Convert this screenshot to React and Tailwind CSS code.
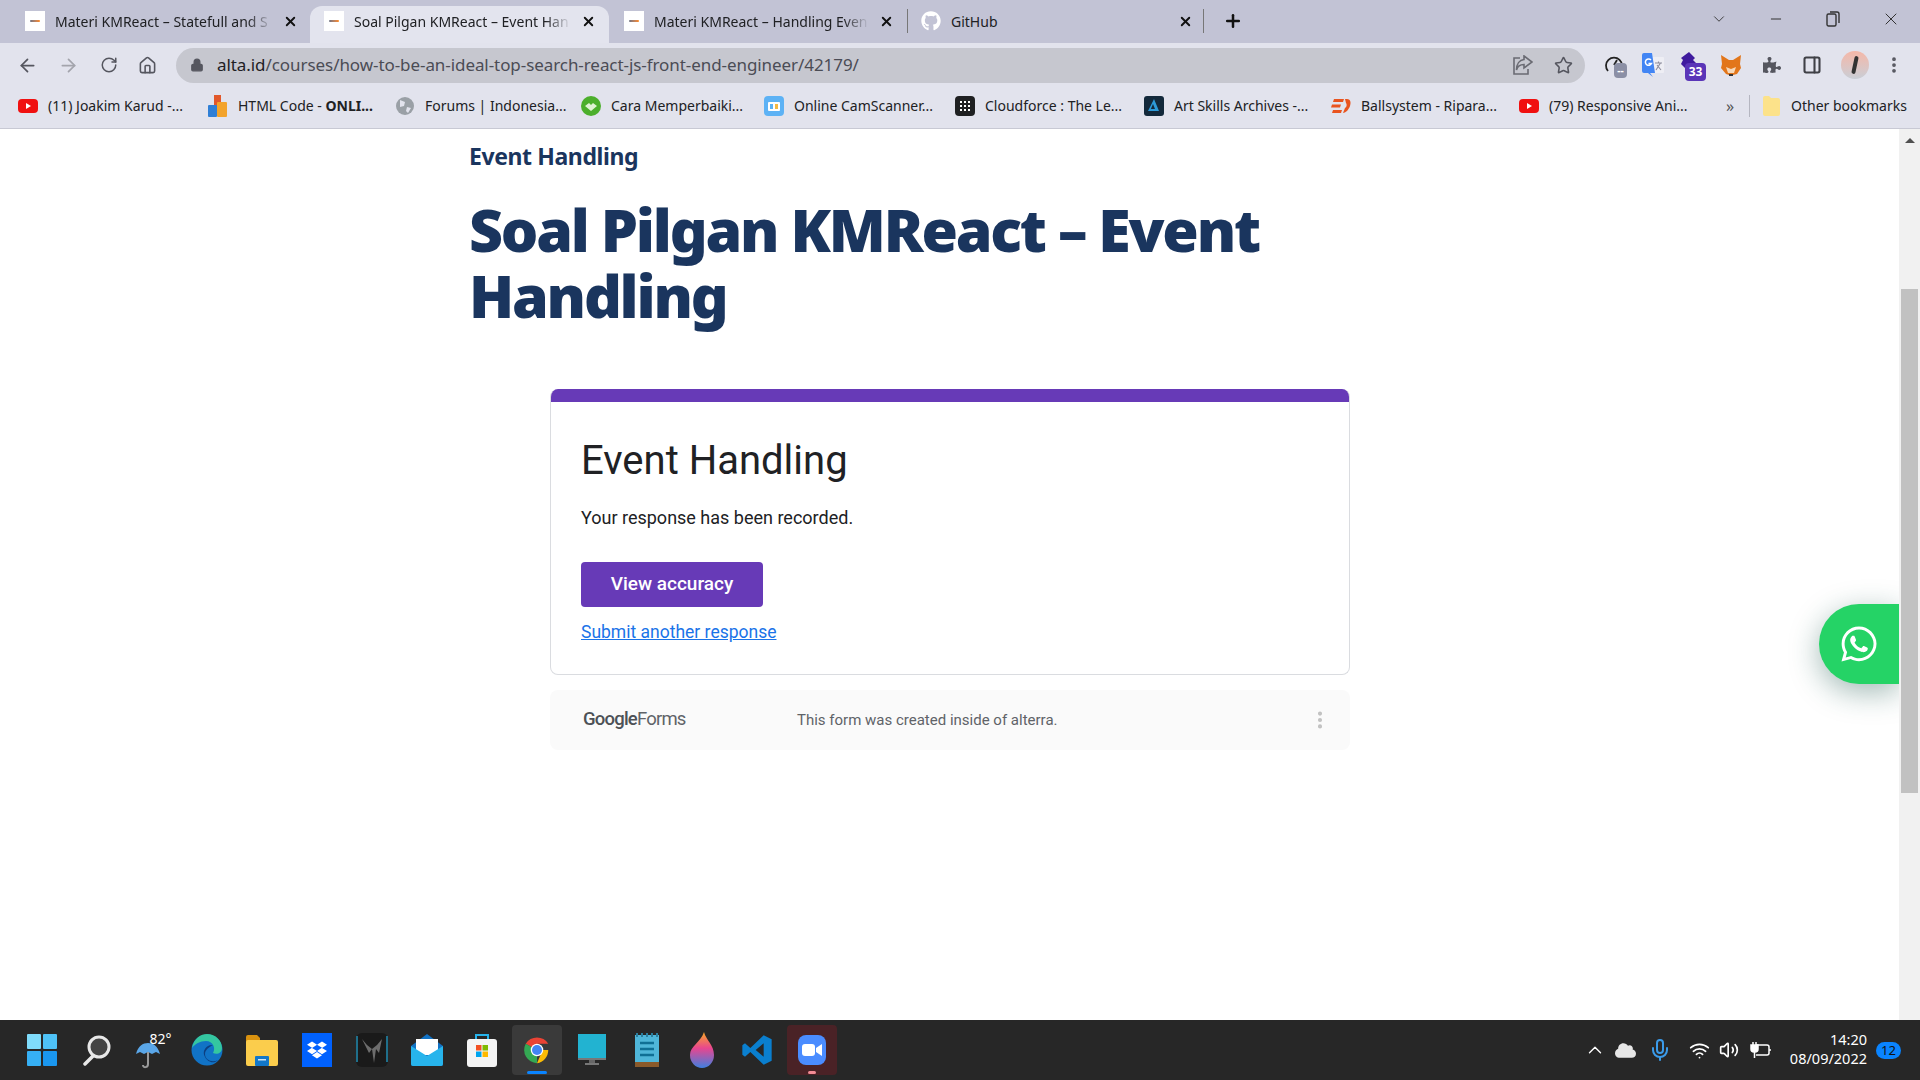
import { ArrowLeft, ArrowRight, RotateCw, Home, Lock, Star, PanelRight, EllipsisVertical, X, Plus, Minus, ChevronDown, ChevronUp, Mic, Wifi, Volume2 } from 'lucide-react';
import { FaWhatsapp, FaGithub, FaCloud, FaDropbox, FaPuzzlePiece } from 'react-icons/fa';

const uiFont = 'font-["Noto_Sans",sans-serif]';

const Favicon = () => (
    <div className="w-5 h-5 bg-white flex items-center justify-center shrink-0">
        <div className="w-[10px] h-[2px] bg-gradient-to-r from-gray-500 to-orange-400 rounded-full"></div>
    </div>
);

const tabs = [
    { title: 'Materi KMReact – Statefull and S', box: 'w-[310px] pl-[25px] pr-[12px]' },
    { title: 'Soal Pilgan KMReact – Event Han', box: 'w-[299px] pl-[14px] pr-[13px] bg-[#e3e4ee] rounded-t-xl', active: true },
    { title: 'Materi KMReact – Handling Even', box: 'w-[298px] pl-[15px] pr-[13px]' },
];

const bookmarks = [
    { label: '(11) Joakim Karud -...', box: 'w-[190px]', icon: <YouTubeIcon /> },
    { label: 'HTML Code - ', bold: 'ONLI...', box: 'w-[187px]', icon: <HtmlIcon /> },
    { label: 'Forums | Indonesia...', box: 'w-[186px]', icon: <GlobeIcon /> },
    { label: 'Cara Memperbaiki...', box: 'w-[183px]', icon: <CaraIcon /> },
    { label: 'Online CamScanner...', box: 'w-[191px]', icon: <CamIcon /> },
    { label: 'Cloudforce : The Le...', box: 'w-[189px]', icon: <GridIcon /> },
    { label: 'Art Skills Archives -...', box: 'w-[187px]', icon: <ArtIcon /> },
    { label: 'Ballsystem - Ripara...', box: 'w-[188px]', icon: <BallIcon /> },
    { label: '(79) Responsive Ani...', box: 'w-[207px]', icon: <YouTubeIcon /> },
];

function YouTubeIcon() {
    return (
        <svg width="20" height="20" viewBox="0 0 20 20">
            <rect x="0" y="3" width="20" height="14" rx="4" fill="#f01010" />
            <path d="M8 7l5 3-5 3z" fill="#fff" />
        </svg>
    );
}

function HtmlIcon() {
    return (
        <svg width="20" height="22" viewBox="0 0 20 22">
            <rect x="6" y="0" width="7" height="11" fill="#e2582b" />
            <rect x="0" y="10" width="9" height="12" rx="1" fill="#2f7fd6" />
            <rect x="9" y="7" width="10" height="15" rx="1" fill="#f3a32b" />
        </svg>
    );
}

function GlobeIcon() {
    return (
        <svg width="20" height="20" viewBox="0 0 20 20">
            <circle cx="10" cy="10" r="9" fill="#9aa0a6" />
            <path d="M5 4l5 2-1 4-4 1zM12 11l4 1-3 5-2-2z" fill="#e2e3ed" />
        </svg>
    );
}

function CaraIcon() {
    return (
        <svg width="20" height="22" viewBox="0 0 20 22">
            <circle cx="10" cy="11" r="10" fill="#4caf2c" />
            <path d="M4 11l4-3 2 2 2-2 4 3-6 5z" fill="#dff3d3" />
        </svg>
    );
}

function CamIcon() {
    return (
        <svg width="20" height="20" viewBox="0 0 20 20">
            <rect width="20" height="20" rx="4" fill="#5db2f5" />
            <rect x="4" y="6" width="12" height="9" rx="1" fill="#fff" />
            <rect x="6" y="8" width="3" height="5" fill="#5db2f5" />
            <rect x="11" y="8" width="3" height="5" fill="#f5b942" />
        </svg>
    );
}

function GridIcon() {
    return (
        <svg width="20" height="20" viewBox="0 0 20 20">
            <rect width="20" height="20" rx="4" fill="#1f2022" />
            <path d="M5 5h2v2H5zM9 5h2v2H9zM13 5h2v2h-2zM5 9h2v2H5zM9 9h2v2H9zM13 9h2v2h-2zM5 13h2v2H5zM9 13h2v2H9zM13 13h2v2h-2z" fill="#fff" />
        </svg>
    );
}

function ArtIcon() {
    return (
        <svg width="20" height="20" viewBox="0 0 20 20">
            <rect width="20" height="20" rx="3" fill="#13293b" />
            <path d="M10 3l5 12H5l2-2h4L9 8l-3 7H4z" fill="#2d9ad8" />
        </svg>
    );
}

function BallIcon() {
    return (
        <svg width="20" height="14" viewBox="0 0 20 14">
            <path d="M3 0h10l-1 3H2zM1 5.500h9l-1 3H0zM2 11h9l-1 3H1zM14 0h2c4 0 4 4 3 7s-4 7-7 7l2-5c2-1 2-4 1-5z" fill="#e9541f" />
        </svg>
    );
}

// taskbar icons, all drawn in a 34px box
function WinIcon() {
    return (
        <svg width="30" height="32" viewBox="0 0 30 32">
            <rect width="14" height="15" rx="1" fill="#7fdcfb" />
            <rect x="16" width="14" height="15" rx="1" fill="#4ec2f7" />
            <rect y="17" width="14" height="15" rx="1" fill="#36b0f5" />
            <rect x="16" y="17" width="14" height="15" rx="1" fill="#1a97f0" />
        </svg>
    );
}

function MagnifierIcon() {
    return (
        <svg width="30" height="32" viewBox="0 0 30 32">
            <circle cx="17" cy="13" r="10" fill="#444" stroke="#e8e8e8" strokeWidth="3" />
            <path d="M11 22L3 30" stroke="#e8e8e8" strokeWidth="3.500" strokeLinecap="round" />
        </svg>
    );
}

function WeatherIcon() {
    return (
        <div className="relative w-[44px] h-[36px]">
            <svg className="absolute left-[5px] top-[9px]" width="26" height="28" viewBox="0 0 26 28">
                <path d="M1 13C3 5 8 2 13 2s10 3 12 11l-4-2-4 2-4-2-4 2-4-2z" fill="#5aa6e8" />
                <path d="M13 11v12c0 4-5 4-5 1" stroke="#9a9a9a" strokeWidth="2" fill="none" />
            </svg>
            <span className={`absolute left-[20px] top-[-4px] text-white text-[14px] ${uiFont}`}>82°</span>
        </div>
    );
}

function EdgeIcon() {
    return (
        <svg width="32" height="34" viewBox="0 0 32 34">
            <circle cx="16" cy="17" r="15.500" fill="#1173c6" />
            <path d="M1 15C3 5 10 1 16 1c9 0 15 7 15 14 0 5-5 7-9 5 3-5 0-12-7-12-6 0-11 3-14 7z" fill="#34c6a0" />
            <path d="M22 12a8 8 0 0 0-8 12c2 4 8 8 13 3-6 3-13 0-13-6 0-4 4-7 8-9z" fill="#0d3f80" />
        </svg>
    );
}

function FolderIcon() {
    return (
        <svg width="32" height="32" viewBox="0 0 32 32">
            <path d="M0 3a2 2 0 0 1 2-2h9l3 3v5H0z" fill="#d9920f" />
            <rect y="6" width="32" height="26" rx="2" fill="#fbcd4c" />
            <rect x="9" y="22" width="14" height="10" rx="1" fill="#1277c9" />
            <rect x="12" y="25" width="8" height="1.500" fill="#cfe5f5" />
        </svg>
    );
}

function DropboxIcon() {
    return (
        <div className="w-[30px] h-[34px] bg-[#0061fe] flex items-center justify-center">
            <FaDropbox className="text-white" size={20} />
        </div>
    );
}

function PredatorIcon() {
    return (
        <svg width="32" height="34" viewBox="0 0 32 34">
            <rect width="32" height="34" rx="6" fill="#1a1a1a" />
            <path d="M1 3v26M31 3v26" stroke="#1f6f8b" strokeWidth="2" />
            <path d="M6 6l5 6 5 4 5-4 5-6-3 14-3-4-2 14-2-14-3 4z" fill="#6d6d6d" />
        </svg>
    );
}

function MailIcon() {
    return (
        <svg width="32" height="32" viewBox="0 0 32 32">
            <path d="M0 12L16 0l16 12v18a2 2 0 0 1-2 2H2a2 2 0 0 1-2-2z" fill="#1272c4" />
            <path d="M5 5h22v16H5z" fill="#fff" />
            <path d="M0 12l16 10 16-10v18a2 2 0 0 1-2 2H2a2 2 0 0 1-2-2z" fill="#27b4ec" />
        </svg>
    );
}

function StoreIcon() {
    return (
        <svg width="30" height="34" viewBox="0 0 30 34">
            <path d="M9 7V2h12v5" stroke="#27b4ec" strokeWidth="2" fill="none" />
            <rect y="6" width="30" height="28" rx="3" fill="#f4f4f4" />
            <rect x="9" y="12" width="5.500" height="5.500" fill="#f25022" />
            <rect x="15.500" y="12" width="5.500" height="5.500" fill="#7fba00" />
            <rect x="9" y="18.500" width="5.500" height="5.500" fill="#00a4ef" />
            <rect x="15.500" y="18.500" width="5.500" height="5.500" fill="#ffb900" />
        </svg>
    );
}

function ChromeIcon() {
    return (
        <svg width="30" height="30" viewBox="0 0 48 48">
            <path d="M24 24L6 14A21 21 0 0 1 42 14H24z" fill="#ea4335" />
            <path d="M24 24H42A21 21 0 0 1 24 45l9-21z" fill="#fbbc05" />
            <path d="M24 24l-0 21A21 21 0 0 1 6 14z" fill="#34a853" />
            <circle cx="24" cy="24" r="10" fill="#fff" />
            <circle cx="24" cy="24" r="8" fill="#4285f4" />
        </svg>
    );
}

function MonitorIcon() {
    return (
        <svg width="28" height="32" viewBox="0 0 28 32">
            <rect width="28" height="24" fill="#22b3d1" />
            <rect y="24" width="28" height="2" fill="#777" />
            <rect x="11" y="26" width="6" height="3" fill="#666" />
            <rect x="7" y="29" width="14" height="2" fill="#777" />
        </svg>
    );
}

function NotepadIcon() {
    return (
        <svg width="24" height="34" viewBox="0 0 24 34">
            <rect y="2" width="24" height="32" fill="#4fb6d9" />
            <rect y="29" width="24" height="5" fill="#8a5a2b" />
            <path d="M5 10h14M5 16h14M5 22h14" stroke="#0f6f95" strokeWidth="2.500" />
            <path d="M2 0v4M7 0v4M12 0v4M17 0v4M22 0v4" stroke="#2b7f9f" strokeWidth="2" />
        </svg>
    );
}

function PaintIcon() {
    return (
        <svg width="24" height="36" viewBox="0 0 24 36">
            <defs>
                <linearGradient id="paintGrad" x1="0" y1="0" x2="0" y2="1">
                    <stop offset="0" stopColor="#f9a825" />
                    <stop offset="0.450" stopColor="#e8468f" />
                    <stop offset="1" stopColor="#3f7fe0" />
                </linearGradient>
            </defs>
            <path d="M14 0c2 8 10 13 10 23a12 13 0 0 1-24 0C0 14 11 10 14 0z" fill="url(#paintGrad)" />
        </svg>
    );
}

function VsCodeIcon() {
    return (
        <svg width="32" height="34" viewBox="0 0 24 24">
            <path d="M17 1l6 3v16l-6 3-10-9.500L3 17l-2-1.500v-7L3 7l4 3.500z M17 7l-6 5 6 5z" fill="#0a7fcf" fillRule="evenodd" />
        </svg>
    );
}

function ZoomIcon() {
    return (
        <div className="w-[28px] h-[30px] rounded-[8px] bg-[#4a8cff] flex items-center justify-center">
            <svg width="20" height="12" viewBox="0 0 20 12">
                <rect width="13" height="12" rx="3" fill="#fff" />
                <path d="M14 4l6-4v12l-6-4z" fill="#fff" />
            </svg>
        </div>
    );
}

const taskbarIcons = [
    { id: 'win', icon: <WinIcon /> },
    { id: 'search', icon: <MagnifierIcon /> },
    { id: 'weather', icon: <WeatherIcon /> },
    { id: 'edge', icon: <EdgeIcon /> },
    { id: 'files', icon: <FolderIcon /> },
    { id: 'dropbox', icon: <DropboxIcon /> },
    { id: 'predator', icon: <PredatorIcon /> },
    { id: 'mail', icon: <MailIcon /> },
    { id: 'store', icon: <StoreIcon /> },
    { id: 'chrome', icon: <ChromeIcon />, box: 'bg-[#3a3a3a] rounded', dot: 'w-5 bg-[#0a84ff]' },
    { id: 'monitor', icon: <MonitorIcon /> },
    { id: 'notepad', icon: <NotepadIcon /> },
    { id: 'paint', icon: <PaintIcon /> },
    { id: 'vscode', icon: <VsCodeIcon /> },
    { id: 'zoom', icon: <ZoomIcon />, box: 'bg-[#4a2226] rounded', dot: 'w-2 bg-[#f28b94]' },
];

const App = () => {
    return (
        <div className={`h-screen w-full flex flex-col overflow-hidden bg-white ${uiFont}`}>
            {/* Tab strip */}
            <div className="h-[43px] bg-[#c2c3d5] flex items-end shrink-0 text-[14px] text-[#202124]">
                {tabs.map(tab => (
                    <div key={tab.title} className={`h-[37px] pb-[7px] flex items-center gap-[10px] shrink-0 ${tab.box}`}>
                        <Favicon />
                        <span className="flex-1 overflow-hidden whitespace-nowrap [mask-image:linear-gradient(to_right,black_88%,transparent)]">{tab.title}</span>
                        <X size={15} strokeWidth={3} className="shrink-0 text-[#111]" />
                    </div>
                ))}
                <div className="h-[37px] pb-[7px] flex items-center shrink-0">
                    <div className="w-px h-[24px] bg-[#777]"></div>
                    <FaGithub size={20} className="text-white ml-[13px]" />
                    <span className="ml-[10px] w-[227px]">GitHub</span>
                    <X size={15} strokeWidth={3} className="shrink-0 text-[#111]" />
                    <div className="w-px h-[24px] bg-[#777] ml-[10px]"></div>
                    <Plus size={20} strokeWidth={3} className="ml-[19px] text-[#111]" />
                </div>
                <div className="flex-1"></div>
                <div className="h-[43px] flex items-center text-[#333] pb-[6px]">
                    <ChevronDown size={18} strokeWidth={1.2} className="mr-[40px]" />
                    <Minus size={16} strokeWidth={1.5} className="mr-[42px]" />
                    <svg className="mr-[41px]" width="14" height="16" viewBox="0 0 14 16" fill="none" stroke="#333" strokeWidth="1.400">
                        <rect x="1" y="3" width="9" height="12" rx="1.500" />
                        <path d="M4 1h7a2 2 0 0 1 2 2v9" />
                    </svg>
                    <X size={20} strokeWidth={1.2} className="mr-[19px]" />
                </div>
            </div>

            {/* Toolbar */}
            <div className="h-[44px] bg-[#e2e3ed] flex items-center shrink-0 text-[#55565f]">
                <ArrowLeft size={21} className="ml-[17px]" />
                <ArrowRight size={21} className="ml-[20px] text-[#a3a4ac]" />
                <RotateCw size={18} className="ml-[21px]" />
                <Home size={19} className="ml-[20px]" />
                <div className="ml-[19px] w-[1409px] h-[35px] rounded-full bg-[#c6c7cf] flex items-center">
                    <Lock size={14} fill="currentColor" className="ml-[14px] shrink-0" />
                    <span className="ml-[13px] text-[17px] tracking-[-0.07px] text-[#4b4c55] flex-1 whitespace-nowrap">
                        <span className="text-[#1f2024]">alta.id</span>/courses/how-to-be-an-ideal-top-search-react-js-front-end-engineer/42179/
                    </span>
                    <svg className="mr-[21px] text-[#6a6b73]" width="21" height="20" viewBox="0 0 21 20" fill="none" stroke="currentColor" strokeWidth="1.600">
                        <path d="M8 3H2v16h14v-5" />
                        <path d="M12 1l8 6-8 6V9.500C8 9.500 5.500 11 4.500 15 4.500 9 7.500 5 12 4.500z" />
                    </svg>
                    <Star size={19} className="mr-[12px]" />
                </div>
                <div className="relative ml-[19px] w-[22px] h-[22px]">
                    <svg width="20" height="20" viewBox="0 0 20 20" fill="none" stroke="#222" strokeWidth="1.800">
                        <path d="M4 17A8 8 0 1 1 16 17" />
                        <path d="M10 11l3-5" />
                    </svg>
                    <div className="absolute left-[10px] top-[9px] w-[13px] h-[15px] bg-[#8b8fa5] rounded-sm text-white text-[10px] leading-[15px] text-center font-bold">--</div>
                </div>
                <svg className="ml-[16px]" width="22" height="24" viewBox="0 0 22 24">
                    <path d="M9 4h12a1 1 0 0 1 1 1v14a1 1 0 0 1-1 1H9z" fill="#eeeef4" />
                    <path d="M13 10h7M16.500 8.500v1.500M14 17l4.500-7M15 12l4 5" stroke="#8c8c9c" strokeWidth="1.100" fill="none" />
                    <path d="M0 2a2 2 0 0 1 2-2h8l3 20H8l3 4-5-4H2a2 2 0 0 1-2-2z" fill="#4285f4" />
                    <path d="M9 7a3.200 3.200 0 1 0 0.500 3.500H6.500" fill="none" stroke="#fff" strokeWidth="1.500" />
                </svg>
                <div className="relative ml-[13px] w-[24px] h-[26px]">
                    <svg width="24" height="24" viewBox="0 0 24 24">
                        <path d="M12 0l6 6-2 2 4 4-8 8-8-8 2-4-2-2z" fill="#3f1b9e" />
                    </svg>
                    <div className="absolute left-[8px] top-[11px] w-[21px] h-[18px] rounded-sm bg-[#5a35b8] text-white text-[12px] leading-[18px] text-center font-bold">33</div>
                </div>
                <svg className="ml-[19px]" width="22" height="22" viewBox="0 0 22 22">
                    <path d="M1 1l8 5h4l8-5-1 9 1 4-4 6-4 1h-4l-3-1-5-6 1-4z" fill="#e2761b" />
                    <path d="M6 13l5 2 5-2-2 6h-6z" fill="#f6d8b8" />
                    <path d="M9 20h4v2H9z" fill="#333" />
                </svg>
                <FaPuzzlePiece size={18} className="ml-[21px] text-[#55565f]" />
                <PanelRight size={20} className="ml-[21px] text-[#3f4046]" strokeWidth={2.500} />
                <div className="ml-[19px] w-[28px] h-[28px] rounded-full bg-gradient-to-b from-[#f4b7a8] to-[#c9ced6] flex items-center justify-center">
                    <div className="w-[4px] h-[18px] bg-[#333] rounded-full rotate-12"></div>
                </div>
                <EllipsisVertical size={20} strokeWidth={2.500} className="ml-[15px]" />
            </div>

            {/* Bookmarks bar */}
            <div className="h-[42px] pb-[4px] bg-[#e2e3ed] border-b border-[#c8c9d4] flex items-center shrink-0 pl-[18px] text-[14px] text-[#202124] whitespace-nowrap">
                {bookmarks.map((b, i) => (
                    <div key={i} className={`flex items-center gap-[10px] shrink-0 ${b.box}`}>
                        <div className="w-5 flex justify-center">{b.icon}</div>
                        <span>{b.label}{b.bold && <b className="font-bold">{b.bold}</b>}</span>
                    </div>
                ))}
                <span className="text-[16px] text-[#555] w-[23px]">»</span>
                <div className="w-px h-[22px] bg-[#b5b6c1]"></div>
                <svg className="ml-[13px]" width="17" height="20" viewBox="0 0 17 20">
                    <path d="M0 2a2 2 0 0 1 2-2h4l2 2h7a2 2 0 0 1 2 2v14a2 2 0 0 1-2 2H2a2 2 0 0 1-2-2z" fill="#fce28a" />
                </svg>
                <span className="ml-[11px]">Other bookmarks</span>
            </div>

            {/* Page */}
            <div className="flex-1 flex min-h-0 relative">
                <main className="flex-1 relative overflow-hidden">
                    <div className="ml-[469px] w-[881px] font-['Noto_Sans',sans-serif] text-[#1a355e]">
                        <h3 className="mt-[9px] text-[23px] leading-[36px] font-bold tracking-[-0.4px]">Event Handling</h3>
                        <h1 className="mt-[22px] text-[59px] leading-[66px] font-black tracking-[-2.2px]">Soal Pilgan KMReact – Event Handling</h1>
                    </div>

                    <div className="ml-[550px] mt-[61px] w-[800px] font-['Roboto',sans-serif]">
                        <div className="bg-white border border-[#dadce0] border-t-0 rounded-lg overflow-hidden h-[286px]">
                            <div className="h-[13px] bg-[#673ab7] -mx-px"></div>
                            <div className="pl-[30px]">
                                <h2 className="mt-[35px] text-[40px] leading-[48px] text-[#202124]">Event Handling</h2>
                                <p className="mt-[19px] text-[18px] leading-[27px] text-[#202124]">Your response has been recorded.</p>
                                <button className="mt-[31px] w-[182px] h-[45px] rounded bg-[#673ab7] text-white text-[19px] font-medium block">View accuracy</button>
                                <a href="#" className="mt-[12px] inline-block text-[17.500px] leading-[27px] text-[#1a73e8] underline">Submit another response</a>
                            </div>
                        </div>
                        <div className="mt-[15px] h-[60px] rounded-lg bg-[#fafafa] flex items-center pl-[33px] pr-[19px]">
                            <span className="w-[214px] text-[18.500px] tracking-[-0.8px] text-[#5f6368]"><span className="font-medium text-[#4d5156]">Google</span>Forms</span>
                            <span className="flex-1 text-[15px] text-[#5f6368]">This form was created inside of alterra.</span>
                            <EllipsisVertical size={22} strokeWidth={2.500} className="text-[#c0c0c0]" />
                        </div>
                    </div>

                    {/* Whatsapp floating button */}
                    <div className="absolute right-0 top-[475px] w-[80px] h-[80px] bg-[#25d366] rounded-l-[40px] shadow-[0_8px_30px_rgba(20,80,70,0.4)] flex items-center justify-center">
                        <FaWhatsapp size={40} className="text-white" />
                    </div>
                </main>

                {/* Scrollbar */}
                <div className="w-[21px] bg-[#f1f1f1] flex flex-col items-center shrink-0">
                    <div className="mt-[9px] w-0 h-0 border-l-[5px] border-r-[5px] border-b-[5px] border-l-transparent border-r-transparent border-b-[#505050]"></div>
                    <div className="mt-[146px] w-[17px] h-[504px] bg-[#c1c1c1]"></div>
                </div>
            </div>

            {/* Taskbar */}
            <div className="h-[60px] bg-[#272727] flex items-center shrink-0 pl-[14px] relative">
                {taskbarIcons.map(item => (
                    <div key={item.id} className="w-[55px] h-[50px] flex items-center justify-center shrink-0">
                        <div className={`relative w-[50px] h-[50px] flex items-center justify-center ${item.box || ''}`}>
                            {item.icon}
                            {item.dot && <div className={`absolute bottom-[1px] h-[3px] rounded-full ${item.dot}`}></div>}
                        </div>
                    </div>
                ))}
                <div className="flex-1"></div>
                <ChevronUp size={22} strokeWidth={1.500} className="text-white mr-[9px]" />
                <FaCloud size={21} className="text-[#e6e6e6] mr-[12px]" />
                <Mic size={24} className="text-[#3b9bea] mr-[17px]" />
                <Wifi size={21} className="text-white mr-[9px]" />
                <Volume2 size={20} className="text-white mr-[11px]" />
                <svg className="mr-[19px]" width="21" height="18" viewBox="0 0 21 18" fill="none" stroke="#fff" strokeWidth="1.500">
                    <path d="M6 4h11a2 2 0 0 1 2 2v6a2 2 0 0 1-2 2H6" />
                    <path d="M20 8v2" />
                    <path d="M3 1v3M6 1v3M1 4h7v4a3 3 0 0 1-3 3H4a3 3 0 0 1-3-3zM4.500 11v6" fill="#fff" />
                </svg>
                <div className="text-white text-[14.500px] leading-[19px] text-right mr-[9px] -mt-[2px]">
                    <div>14:20</div>
                    <div>08/09/2022</div>
                </div>
                <div className="w-[25px] h-[17px] rounded-full bg-[#0a84ff] text-[#111] text-[13px] leading-[17px] text-center mr-[19px]">12</div>
            </div>
        </div>
    );
};

export default App;
